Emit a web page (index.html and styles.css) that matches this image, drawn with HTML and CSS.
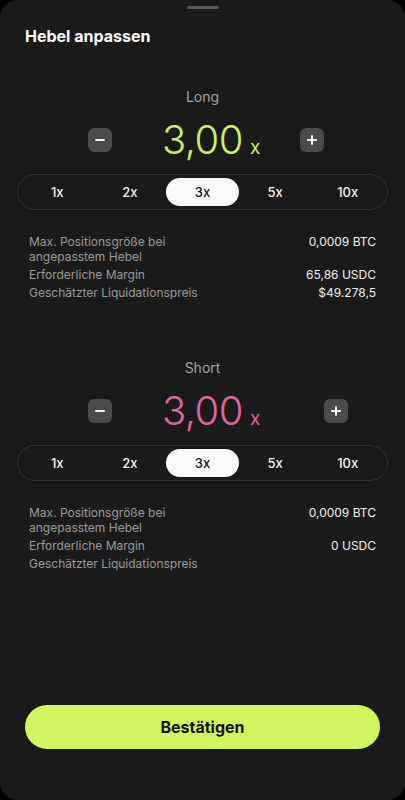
FILE: index.html
```html
<!DOCTYPE html>
<html lang="de">
<head>
<meta charset="utf-8">
<link rel="stylesheet" href="styles.css">
</head>
<body>
<div class="sheet">
  <div class="handle"></div>
  <h1 class="title">Hebel anpassen</h1>

  <section class="side">
    <div class="side-label">Long</div>
    <div class="stepper stepper-long">
      <button class="step-btn" aria-label="verringern"><span class="minus"></span></button>
      <div class="value value-long"><span class="num">3,00</span><span class="unit">x</span></div>
      <button class="step-btn step-plus" aria-label="erhöhen"><span class="minus"></span><span class="vbar"></span></button>
    </div>
    <div class="segments">
      <span class="seg">1x</span><span class="seg">2x</span><span class="seg active">3x</span><span class="seg">5x</span><span class="seg">10x</span>
    </div>
    <div class="info">
      <div class="row"><span class="lbl">Max. Positionsgröße bei angepasstem Hebel</span><span class="val">0,0009 BTC</span></div>
      <div class="row"><span class="lbl">Erforderliche Margin</span><span class="val">65,86 USDC</span></div>
      <div class="row"><span class="lbl">Geschätzter Liquidationspreis</span><span class="val">$49.278,5</span></div>
    </div>
  </section>

  <section class="side side-short">
    <div class="side-label">Short</div>
    <div class="stepper stepper-short">
      <button class="step-btn" aria-label="verringern"><span class="minus"></span></button>
      <div class="value value-short"><span class="num">3,00</span><span class="unit">x</span></div>
      <button class="step-btn step-plus" aria-label="erhöhen"><span class="minus"></span><span class="vbar"></span></button>
    </div>
    <div class="segments">
      <span class="seg">1x</span><span class="seg">2x</span><span class="seg active">3x</span><span class="seg">5x</span><span class="seg">10x</span>
    </div>
    <div class="info">
      <div class="row"><span class="lbl">Max. Positionsgröße bei angepasstem Hebel</span><span class="val">0,0009 BTC</span></div>
      <div class="row"><span class="lbl">Erforderliche Margin</span><span class="val">0 USDC</span></div>
      <div class="row"><span class="lbl">Geschätzter Liquidationspreis</span><span class="val"></span></div>
    </div>
  </section>

  <button class="confirm">Bestätigen</button>
</div>
</body>
</html>
```

FILE: styles.css
```css
* { box-sizing: border-box; }
html, body { margin: 0; padding: 0; background: #000; }
body { font-family: Inter, "Noto Sans", sans-serif; color: #fff; }

.sheet {
  width: 405px;
  height: 800px;
  background: #1a1a1a;
  border-radius: 18px;
  display: flex;
  flex-direction: column;
  padding-top: 6px;
  overflow: hidden;
}

.handle {
  width: 32px;
  height: 3px;
  border-radius: 2px;
  background: #5a5a5a;
  margin: 0 auto;
}

.title {
  margin: 17px 0 0 25px;
  font-size: 16px;
  line-height: 20px;
  font-weight: 700;
  color: #fff;
}

.side { margin-top: 42px; }
.side-short { margin-top: 59px; }

.side-label {
  text-align: center;
  font-size: 14px;
  line-height: 18px;
  color: #a3a3a3;
}

.stepper {
  margin-top: 14px;
  height: 40px;
  display: flex;
  align-items: center;
  padding-left: 88px;
}
.stepper-long { padding-right: 81px; }
.stepper-short { padding-right: 57px; }

.step-btn {
  position: relative;
  width: 24px;
  height: 24px;
  border: 0;
  border-radius: 6px;
  background: #4b4b4b;
  padding: 0;
  flex: none;
}
.step-plus { margin-left: auto; }
.minus {
  position: absolute;
  left: 7px;
  top: 11px;
  width: 10px;
  height: 2px;
  background: #f2f2f2;
  border-radius: 1px;
}
.vbar {
  position: absolute;
  left: 11px;
  top: 7px;
  width: 2px;
  height: 10px;
  background: #f2f2f2;
  border-radius: 1px;
}

.value {
  margin-left: 50px;
  display: flex;
  align-items: baseline;
}
.num {
  font-size: 40px;
  line-height: 40px;
  font-weight: 300;
  letter-spacing: -0.5px;
}
.unit {
  font-size: 19px;
  margin-left: 7px;
}
.value-long { color: #c8f06c; }
.value-short { color: #e064a4; }

.segments {
  margin: 14px 17px 0;
  height: 36px;
  border: 1px solid #333;
  border-radius: 18px;
  padding: 3px;
  display: grid;
  grid-template-columns: repeat(5, 1fr);
}
.seg {
  display: flex;
  align-items: center;
  justify-content: center;
  border-radius: 14px;
  font-size: 13px;
  font-weight: 500;
  color: #f2f2f2;
}
.seg.active {
  background: #fafafa;
  color: #111;
}

.info {
  margin: 24px 29px 0;
  display: flex;
  flex-direction: column;
  gap: 3px;
}
.row {
  display: flex;
  justify-content: space-between;
  font-size: 12px;
  line-height: 15px;
}
.lbl {
  color: #9a9a9a;
  width: 175px;
}
.val {
  color: #f0f0f0;
  text-align: right;
}

.confirm {
  margin: auto 25px 51px;
  height: 44px;
  border: 0;
  border-radius: 22px;
  background: #d1f65f;
  color: #111;
  font-family: Inter, "Noto Sans", sans-serif;
  font-size: 16px;
  font-weight: 700;
}
```
